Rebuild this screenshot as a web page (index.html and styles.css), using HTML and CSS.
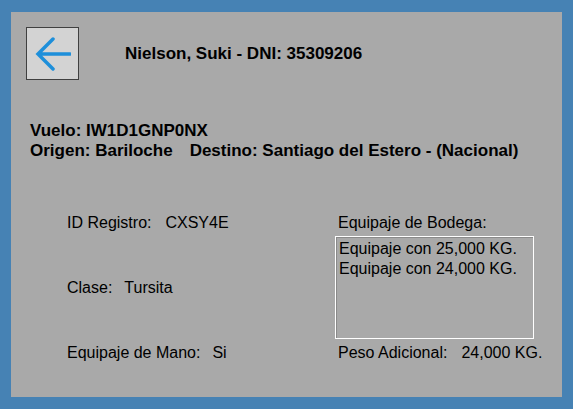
FILE: index.html
```html
<!DOCTYPE html>
<html lang="es">
<head>
<meta charset="utf-8">
<title>Detalle pasajero</title>
<link rel="stylesheet" href="styles.css">
</head>
<body>
<div class="panel">
  <div class="header">
    <button class="back" type="button" aria-label="Volver">
      <svg width="36" height="36" viewBox="0 0 36 36">
        <path d="M3 18 H35 M18 3 L3 18 L18 33" fill="none" stroke="#1E8FDA" stroke-width="3.5" stroke-linecap="round" stroke-linejoin="miter"/>
      </svg>
    </button>
    <div class="title">Nielson, Suki - DNI: 35309206</div>
  </div>
  <div class="flight">
    <div>Vuelo: IW1D1GNP0NX</div>
    <div><span class="origin">Origen: Bariloche</span><span>Destino: Santiago del Estero - (Nacional)</span></div>
  </div>
  <div class="details">
    <div class="col-left">
      <div class="field row1"><span class="lbl lbl-id">ID Registro:</span><span>CXSY4E</span></div>
      <div class="field row2"><span class="lbl lbl-clase">Clase:</span><span>Tursita</span></div>
      <div class="field row3"><span class="lbl lbl-mano">Equipaje de Mano:</span><span>Si</span></div>
    </div>
    <div class="col-right">
      <div class="field">Equipaje de Bodega:</div>
      <div class="listbox">
        <div>Equipaje con 25,000 KG.</div>
        <div>Equipaje con 24,000 KG.</div>
      </div>
      <div class="field peso"><span class="lbl lbl-peso">Peso Adicional:</span><span>24,000 KG.</span></div>
    </div>
  </div>
</div>
</body>
</html>
```
FILE: styles.css
```css
html, body {
  margin: 0;
  padding: 0;
}
body {
  background: #4682B4;
  width: 573px;
  height: 409px;
  overflow: hidden;
  font-family: "Liberation Sans", Arial, sans-serif;
  font-size: 16px;
  color: #000;
}
.panel {
  margin: 12px 11px 0 11px;
  height: 385px;
  background: #A9A9A9;
  box-sizing: border-box;
  padding: 15px 0 0 15px;
}
.header {
  display: flex;
  align-items: center;
  height: 53px;
}
.back {
  width: 53px;
  height: 53px;
  box-sizing: border-box;
  border: 1px solid #404040;
  background: #D3D3D3;
  padding: 0;
  margin: 0;
  display: flex;
  align-items: center;
  justify-content: center;
}
.back svg {
  display: block;
  margin-left: 0;
}
.title {
  margin-left: 46px;
  font-weight: bold;
  font-size: 17px;
}
.flight {
  margin-top: 41px;
  margin-left: 4px;
  font-weight: bold;
  font-size: 17px;
  line-height: 20px;
}
.origin {
  margin-right: 17px;
}
.details {
  display: flex;
  margin-top: 52px;
  line-height: 20px;
}
.col-left {
  width: 312px;
  padding-left: 41px;
  box-sizing: border-box;
  display: flex;
  flex-direction: column;
}
.row2 { margin-top: 45px; }
.row3 { margin-top: 45px; }
.lbl { margin-right: 14px; }
.lbl-clase { margin-right: 12px; }
.lbl-mano { margin-right: 12px; }
.col-right {
  display: flex;
  flex-direction: column;
}
.listbox {
  margin-top: 3px;
  margin-left: -3px;
  width: 199px;
  height: 103px;
  box-sizing: border-box;
  border: 1px solid #fff;
  box-shadow: inset 1px 1px 0 #8a8a8a;
  padding: 2px 0 0 3px;
  line-height: 20px;
}
.peso {
  margin-top: 4px;
}
```
